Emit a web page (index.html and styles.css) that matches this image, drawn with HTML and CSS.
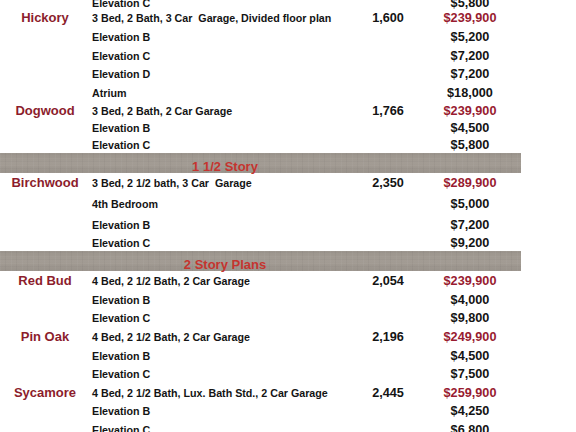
FILE: index.html
```html
<!DOCTYPE html>
<html>
<head>
<meta charset="utf-8">
<link rel="stylesheet" href="styles.css">
</head>
<body>
<div class="sheet">
  <div class="row cut"><span class="name"></span><span class="desc">Elevation C</span><span class="sqft"></span><span class="price">$5,800</span></div>
  <div class="row"><span class="name">Hickory</span><span class="desc">3 Bed, 2 Bath, 3 Car&nbsp; Garage, Divided floor plan</span><span class="sqft">1,600</span><span class="price base">$239,900</span></div>
  <div class="row"><span class="name"></span><span class="desc">Elevation B</span><span class="sqft"></span><span class="price">$5,200</span></div>
  <div class="row"><span class="name"></span><span class="desc">Elevation C</span><span class="sqft"></span><span class="price">$7,200</span></div>
  <div class="row"><span class="name"></span><span class="desc">Elevation D</span><span class="sqft"></span><span class="price">$7,200</span></div>
  <div class="row"><span class="name"></span><span class="desc">Atrium</span><span class="sqft"></span><span class="price">$18,000</span></div>
  <div class="row tight"><span class="name">Dogwood</span><span class="desc">3 Bed, 2 Bath, 2 Car Garage</span><span class="sqft">1,766</span><span class="price base">$239,900</span></div>
  <div class="row tight"><span class="name"></span><span class="desc">Elevation B</span><span class="sqft"></span><span class="price">$4,500</span></div>
  <div class="row tight"><span class="name"></span><span class="desc">Elevation C</span><span class="sqft"></span><span class="price">$5,800</span></div>

  <div class="bar"><span class="bar-title">1 1/2 Story</span></div>

  <div class="row loose"><span class="name">Birchwood</span><span class="desc">3 Bed, 2 1/2 bath, 3 Car&nbsp; Garage</span><span class="sqft">2,350</span><span class="price base">$289,900</span></div>
  <div class="row loose"><span class="name"></span><span class="desc">4th Bedroom</span><span class="sqft"></span><span class="price">$5,000</span></div>
  <div class="row"><span class="name"></span><span class="desc">Elevation B</span><span class="sqft"></span><span class="price">$7,200</span></div>
  <div class="row tight"><span class="name"></span><span class="desc">Elevation C</span><span class="sqft"></span><span class="price">$9,200</span></div>

  <div class="bar"><span class="bar-title">2 Story Plans</span></div>

  <div class="row"><span class="name">Red Bud</span><span class="desc">4 Bed, 2 1/2 Bath, 2 Car Garage</span><span class="sqft">2,054</span><span class="price base">$239,900</span></div>
  <div class="row"><span class="name"></span><span class="desc">Elevation B</span><span class="sqft"></span><span class="price">$4,000</span></div>
  <div class="row"><span class="name"></span><span class="desc">Elevation C</span><span class="sqft"></span><span class="price">$9,800</span></div>
  <div class="row"><span class="name">Pin Oak</span><span class="desc">4 Bed, 2 1/2 Bath, 2 Car Garage</span><span class="sqft">2,196</span><span class="price base">$249,900</span></div>
  <div class="row"><span class="name"></span><span class="desc">Elevation B</span><span class="sqft"></span><span class="price">$4,500</span></div>
  <div class="row"><span class="name"></span><span class="desc">Elevation C</span><span class="sqft"></span><span class="price">$7,500</span></div>
  <div class="row"><span class="name">Sycamore</span><span class="desc">4 Bed, 2 1/2 Bath, Lux. Bath Std., 2 Car Garage</span><span class="sqft">2,445</span><span class="price base">$259,900</span></div>
  <div class="row"><span class="name"></span><span class="desc">Elevation B</span><span class="sqft"></span><span class="price">$4,250</span></div>
  <div class="row"><span class="name"></span><span class="desc">Elevation C</span><span class="sqft"></span><span class="price">$6,800</span></div>
</div>
</body>
</html>
```
FILE: styles.css
```css
html, body {
  margin: 0;
  padding: 0;
  background: #ffffff;
  overflow: hidden;
}

body {
  font-family: "Liberation Sans", Arial, sans-serif;
  font-weight: bold;
  color: #141414;
}

.sheet {
  margin-top: -6px;
  width: 524px;
}

.row {
  display: grid;
  grid-template-columns: 90px 270px 56px 108px;
  align-items: start;
  height: 18.6px;
  line-height: 18.7px;
  white-space: nowrap;
}

.row.cut { height: 15.4px; }
.row.tight { height: 16.8px; }
.row.loose { height: 21px; }

.name {
  text-align: center;
  font-size: 13px;
  color: #8c1d2c;
}

.desc {
  padding-left: 2px;
  font-size: 10.7px;
}

.sqft {
  text-align: center;
  font-size: 12.7px;
}

.price {
  text-align: center;
  font-size: 12.7px;
}

.price.base {
  color: #981b30;
}

.bar {
  box-sizing: border-box;
  width: 521px;
  height: 20px;
  margin-bottom: 1px;
  padding: 4px 71px 0 0;
  line-height: 20px;
  text-align: center;
  font-size: 13px;
  color: #c5342f;
  background-color: #a19a92;
  background-image:
    repeating-linear-gradient(90deg, rgba(255,255,255,0.035) 0 1px, rgba(0,0,0,0) 1px 5px, rgba(0,0,0,0.03) 5px 6px, rgba(0,0,0,0) 6px 11px),
    repeating-linear-gradient(0deg, rgba(255,255,255,0.03) 0 1px, rgba(0,0,0,0) 1px 4px, rgba(0,0,0,0.025) 4px 5px, rgba(0,0,0,0) 5px 7px),
    linear-gradient(180deg, rgba(0,0,0,0.03), rgba(255,255,255,0.02) 50%, rgba(0,0,0,0.05));
}

.bar-title {
  display: inline-block;
}
```
